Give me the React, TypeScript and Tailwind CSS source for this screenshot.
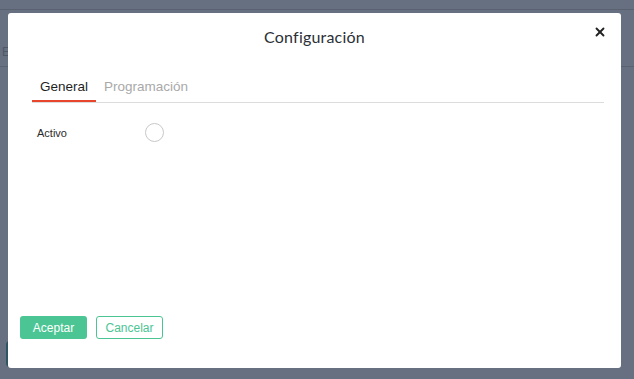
import React from 'react';
import { X } from 'lucide-react';

const App = () => {
  return (
    <div className="relative w-[634px] h-[379px] overflow-hidden bg-[#667080] font-['Liberation_Sans',Arial,sans-serif]">
      {/* Page behind the overlay */}
      <div className="h-[10px] border-b border-[#5a6170]" />
      <div className="h-[57px] border-b border-[#5a6170] flex items-end pl-[2px] pb-[8px]">
        <span className="text-[#505766] text-[12px] leading-none">E</span>
      </div>
      <div className="absolute left-[6px] top-[341px] w-[40px] h-[26px] rounded-[4px] border-2 border-[#2f5563]" />

      {/* Modal */}
      <div className="absolute left-[8px] top-[13px] w-[613px] h-[355px] bg-white rounded-[3px] flex flex-col">
        <div className="relative h-[50px] flex justify-center pt-[12px]">
          <h2 className="text-[16px] text-[#2b2f36] tracking-[0.2px] font-['Lato',sans-serif]">Configuración</h2>
          <button className="absolute right-[14px] top-[12px] text-[#222]">
            <X className="w-[14px] h-[14px]" strokeWidth={3.2} />
          </button>
        </div>

        <div className="pl-[24px] pr-[17px] pt-[14px]">
          <div className="flex border-b border-[#dcdcdc] text-[13.5px]">
            <div className="px-[8px] pb-[3px] border-b-2 border-[#e8472d] text-[#1f1f1f]">General</div>
            <div className="px-[8px] pb-[3px] text-[#a9a9a9]">Programación</div>
          </div>
        </div>

        <div className="pl-[29px] pt-[20px] flex items-center">
          <span className="w-[108px] text-[11px] text-[#2a2a2a]">Activo</span>
          <span className="w-[19px] h-[19px] rounded-full border border-[#c8c8c8] bg-white" />
        </div>

        <div className="mt-auto pl-[12px] pb-[29px] flex gap-[9px]">
          <button className="w-[67px] h-[23px] rounded-[3px] bg-[#4cc594] text-white text-[12px]">Aceptar</button>
          <button className="w-[67px] h-[23px] rounded-[3px] border border-[#4cc594] text-[#4cc594] text-[12px] bg-white">Cancelar</button>
        </div>
      </div>
    </div>
  );
};

export default App;
